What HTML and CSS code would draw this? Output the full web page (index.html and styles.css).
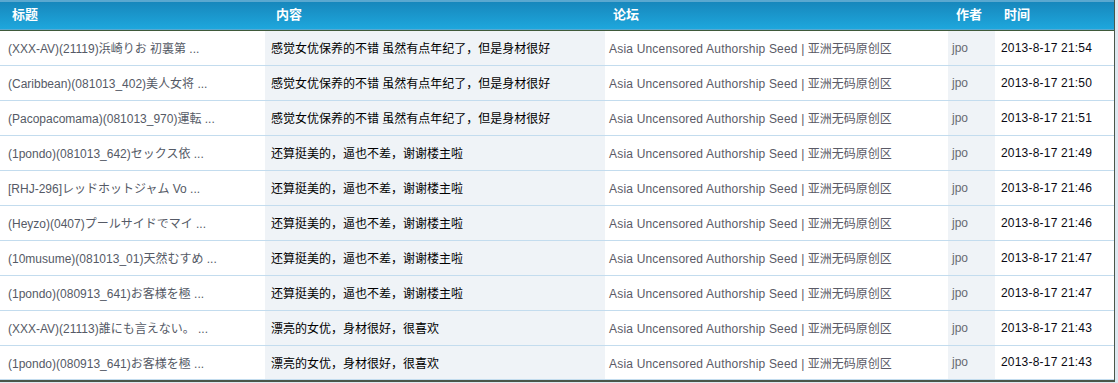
FILE: index.html
```html
<!DOCTYPE html>
<html lang="zh">
<head>
<meta charset="utf-8">
<title>回复列表</title>
<link rel="stylesheet" href="styles.css">
</head>
<body>
<div class="wrap">
<table class="list">
  <colgroup>
    <col class="c-title"><col class="c-content"><col class="c-forum"><col class="c-author"><col class="c-time">
  </colgroup>
  <thead>
    <tr>
      <th class="h-title">标题</th>
      <th class="h-content">内容</th>
      <th class="h-forum">论坛</th>
      <th class="h-author">作者</th>
      <th class="h-time">时间</th>
    </tr>
  </thead>
  <tbody>
    <tr><td class="title">(XXX-AV)(21119)浜崎りお 初裏第 ...</td><td class="content">感觉女优保养的不错 虽然有点年纪了，但是身材很好</td><td class="forum"><span class="en">Asia Uncensored Authorship Seed |</span> 亚洲无码原创区</td><td class="author">jpo</td><td class="time">2013-8-17 21:54</td></tr>
    <tr><td class="title">(Caribbean)(081013_402)美人女将 ...</td><td class="content">感觉女优保养的不错 虽然有点年纪了，但是身材很好</td><td class="forum"><span class="en">Asia Uncensored Authorship Seed |</span> 亚洲无码原创区</td><td class="author">jpo</td><td class="time">2013-8-17 21:50</td></tr>
    <tr><td class="title">(Pacopacomama)(081013_970)運転 ...</td><td class="content">感觉女优保养的不错 虽然有点年纪了，但是身材很好</td><td class="forum"><span class="en">Asia Uncensored Authorship Seed |</span> 亚洲无码原创区</td><td class="author">jpo</td><td class="time">2013-8-17 21:51</td></tr>
    <tr><td class="title">(1pondo)(081013_642)セックス依 ...</td><td class="content">还算挺美的，逼也不差，谢谢楼主啦</td><td class="forum"><span class="en">Asia Uncensored Authorship Seed |</span> 亚洲无码原创区</td><td class="author">jpo</td><td class="time">2013-8-17 21:49</td></tr>
    <tr><td class="title">[RHJ-296]レッドホットジャム Vo ...</td><td class="content">还算挺美的，逼也不差，谢谢楼主啦</td><td class="forum"><span class="en">Asia Uncensored Authorship Seed |</span> 亚洲无码原创区</td><td class="author">jpo</td><td class="time">2013-8-17 21:46</td></tr>
    <tr><td class="title">(Heyzo)(0407)プールサイドでマイ ...</td><td class="content">还算挺美的，逼也不差，谢谢楼主啦</td><td class="forum"><span class="en">Asia Uncensored Authorship Seed |</span> 亚洲无码原创区</td><td class="author">jpo</td><td class="time">2013-8-17 21:46</td></tr>
    <tr><td class="title">(10musume)(081013_01)天然むすめ ...</td><td class="content">还算挺美的，逼也不差，谢谢楼主啦</td><td class="forum"><span class="en">Asia Uncensored Authorship Seed |</span> 亚洲无码原创区</td><td class="author">jpo</td><td class="time">2013-8-17 21:47</td></tr>
    <tr><td class="title">(1pondo)(080913_641)お客様を極 ...</td><td class="content">还算挺美的，逼也不差，谢谢楼主啦</td><td class="forum"><span class="en">Asia Uncensored Authorship Seed |</span> 亚洲无码原创区</td><td class="author">jpo</td><td class="time">2013-8-17 21:47</td></tr>
    <tr><td class="title">(XXX-AV)(21113)誰にも言えない。 ...</td><td class="content">漂亮的女优，身材很好，很喜欢</td><td class="forum"><span class="en">Asia Uncensored Authorship Seed |</span> 亚洲无码原创区</td><td class="author">jpo</td><td class="time">2013-8-17 21:43</td></tr>
    <tr><td class="title">(1pondo)(080913_641)お客様を極 ...</td><td class="content">漂亮的女优，身材很好，很喜欢</td><td class="forum"><span class="en">Asia Uncensored Authorship Seed |</span> 亚洲无码原创区</td><td class="author">jpo</td><td class="time">2013-8-17 21:43</td></tr>
  </tbody>
</table>
</div>
</body>
</html>
```

FILE: styles.css
```css
html, body {
  margin: 0;
  padding: 0;
}
body {
  background: #dde8f0;
  font-family: "Liberation Sans", Arial, "Noto Sans CJK SC", sans-serif;
  font-size: 12px;
  width: 1118px;
  height: 383px;
  overflow: hidden;
}
.wrap {
  width: 1114px;
  background: #ffffff;
  border-right: 1px solid #4a5649;
  border-bottom: 2px solid #4a5649;
}
.list {
  width: 1114px;
  border-collapse: collapse;
  table-layout: fixed;
}
.c-title { width: 265px; }
.c-content { width: 340px; }
.c-forum { width: 343px; }
.c-author { width: 47px; }
.c-time { width: 119px; }

thead tr {
  height: 30px;
  background: linear-gradient(to bottom, #5aa8d0 0, #5aa8d0 2px, #1787bc 2px, #1ea8de 30px);
  border-bottom: 1px solid #3f5a3a;
}
th {
  color: #ffffff;
  font-weight: bold;
  font-size: 13px;
  text-align: left;
  padding: 0 0 2px 0;
  vertical-align: middle;
  white-space: nowrap;
}
.h-title { padding-left: 12px; }
.h-content { padding-left: 11px; }
.h-forum { padding-left: 8px; }
.h-author { padding-left: 8px; }
.h-time { padding-left: 9px; }

tbody tr {
  height: 35px;
  border-bottom: 1px solid #c3dcee;
}
tbody tr:last-child {
  height: 34px;
}
td {
  padding: 0;
  vertical-align: middle;
  white-space: nowrap;
  overflow: hidden;
}
.title {
  padding-left: 8px;
  color: #555a66;
}
.content {
  padding-left: 6px;
  background: #eff3f7;
  color: #000000;
}
.forum {
  padding-left: 4px;
  color: #5a5a66;
}
.forum .en {
  letter-spacing: 0.19px;
}
.author {
  padding-left: 4px;
  background: #eff3f7;
  color: #666a72;
}
.time {
  padding-left: 6px;
  color: #0a0a14;
  letter-spacing: 0.2px;
}
```
